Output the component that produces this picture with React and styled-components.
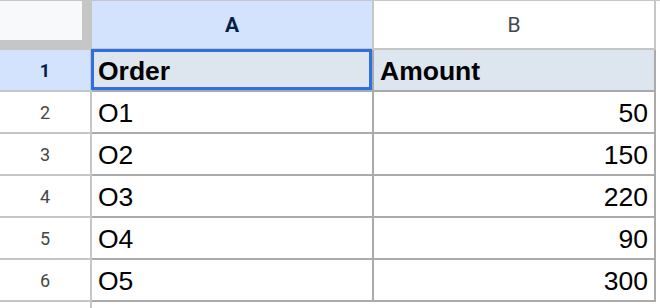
import React from "react";
import styled, { createGlobalStyle } from "styled-components";

const Global = createGlobalStyle`
  html, body { margin: 0; padding: 0; background: #ffffff; }
  body { width: 660px; height: 308px; overflow: hidden; }
`;

const Sheet = styled.div`
  display: grid;
  grid-template-columns: 92px 282px 282px;
  grid-template-rows: 49px repeat(6, 42px) 20px;
  border-top: 1px solid #c4c7c5;
  width: 660px;
  box-sizing: border-box;
`;

const Corner = styled.div`
  box-sizing: border-box;
  background: #f8f9fa;
  border-right: 10px solid #c4c7c5;
  border-bottom: 10px solid #c4c7c5;
`;

const ColHeader = styled.div`
  box-sizing: border-box;
  display: flex;
  align-items: center;
  justify-content: center;
  background: ${(p) => (p.$active ? "#d3e3fd" : "#ffffff")};
  color: ${(p) => (p.$active ? "#041e49" : "#444746")};
  font-family: Roboto, "Liberation Sans", sans-serif;
  font-weight: ${(p) => (p.$active ? 700 : 400)};
  font-size: 21px;
  border-right: 2px solid #c4c7c5;
  border-bottom: 2px solid #c4c7c5;
`;

const RowHeader = styled.div`
  box-sizing: border-box;
  display: flex;
  align-items: center;
  justify-content: center;
  background: ${(p) => (p.$active ? "#d3e3fd" : "#ffffff")};
  color: ${(p) => (p.$active ? "#041e49" : "#444746")};
  font-family: Roboto, "Liberation Sans", sans-serif;
  font-weight: ${(p) => (p.$active ? 700 : 400)};
  font-size: 18px;
  border-right: 2px solid #c4c7c5;
  border-bottom: ${(p) => (p.$last ? "none" : "2px solid #c4c7c5")};
`;

const Cell = styled.div`
  position: relative;
  box-sizing: border-box;
  display: flex;
  align-items: center;
  justify-content: ${(p) => (p.$num ? "flex-end" : "flex-start")};
  padding: 1px 6px 0;
  background: ${(p) => (p.$head ? "#dde5ef" : "#ffffff")};
  color: #000000;
  font-family: "Liberation Sans", Arial, sans-serif;
  font-size: 26.5px;
  font-weight: ${(p) => (p.$head ? 700 : 400)};
  line-height: 40px;
  border-right: ${(p) => (p.$blank ? "none" : "2px solid #aaaaaa")};
  border-bottom: ${(p) => (p.$blank ? "none" : "2px solid #aaaaaa")};
  white-space: nowrap;
`;

const Selection = styled.div`
  position: absolute;
  top: -1px;
  left: -1px;
  right: 0;
  bottom: 0;
  border: 3px solid #2f6fe4;
  pointer-events: none;
`;

const rows = [
  ["O1", "50"],
  ["O2", "150"],
  ["O3", "220"],
  ["O4", "90"],
  ["O5", "300"],
];

export default function App() {
  return (
    <>
      <Global />
      <Sheet>
        <Corner />
        <ColHeader $active>A</ColHeader>
        <ColHeader>B</ColHeader>

        <RowHeader $active>1</RowHeader>
        <Cell $head>
          Order
          <Selection />
        </Cell>
        <Cell $head>Amount</Cell>

        {rows.map(([order, amount], i) => (
          <React.Fragment key={order}>
            <RowHeader>{i + 2}</RowHeader>
            <Cell>{order}</Cell>
            <Cell $num>{amount}</Cell>
          </React.Fragment>
        ))}

        <RowHeader $last />
        <Cell $blank />
        <Cell $blank />
      </Sheet>
    </>
  );
}
